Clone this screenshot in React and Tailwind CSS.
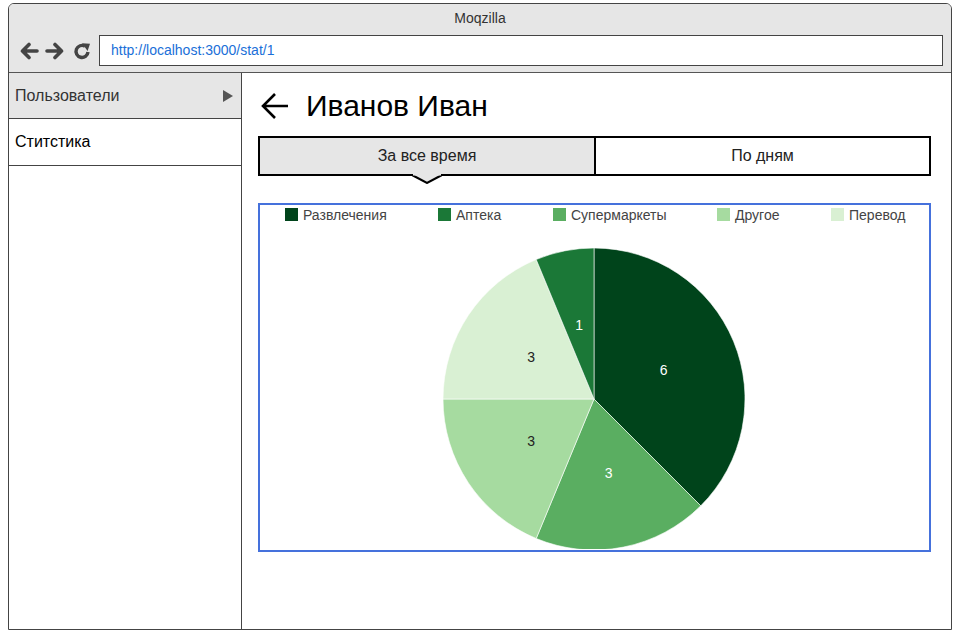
const slices = [
    { label: "Развлечения", value: 6, color: "#00441b", text: "#ffffff" },
    { label: "Супермаркеты", value: 3, color: "#5aae61", text: "#ffffff" },
    { label: "Другое", value: 3, color: "#a6dba0", text: "#222222" },
    { label: "Перевод", value: 3, color: "#d9f0d3", text: "#222222" },
    { label: "Аптека", value: 1, color: "#1b7837", text: "#ffffff" },
];

const legend = [
    { label: "Развлечения", color: "#00441b", x: 25 },
    { label: "Аптека", color: "#1b7837", x: 178 },
    { label: "Супермаркеты", color: "#5aae61", x: 293 },
    { label: "Другое", color: "#a6dba0", x: 457 },
    { label: "Перевод", color: "#d9f0d3", x: 571 },
];

const Pie = () => {
    const cx = 334;
    const cy = 194;
    const r = 151;
    const total = slices.reduce((s, d) => s + d.value, 0);
    let start = -Math.PI / 2;
    const parts = slices.map((d) => {
        const angle = (d.value / total) * Math.PI * 2;
        const end = start + angle;
        const x1 = cx + r * Math.cos(start);
        const y1 = cy + r * Math.sin(start);
        const x2 = cx + r * Math.cos(end);
        const y2 = cy + r * Math.sin(end);
        const large = angle > Math.PI ? 1 : 0;
        const mid = start + angle / 2;
        const lr = r * 0.5;
        const part = {
            ...d,
            path: `M${cx},${cy} L${x1},${y1} A${r},${r} 0 ${large} 1 ${x2},${y2} Z`,
            lx: cx + lr * Math.cos(mid),
            ly: cy + lr * Math.sin(mid),
        };
        start = end;
        return part;
    });

    return (
        <svg width="668" height="344" viewBox="0 0 668 344" className="block">
            {legend.map((l) => (
                <g key={l.label}>
                    <rect x={l.x} y={3} width="13" height="13" fill={l.color} />
                    <text
                        x={l.x + 18}
                        y={14.5}
                        fontSize="14"
                        fill="#444"
                        fontFamily="'Liberation Sans', Arial, sans-serif"
                    >
                        {l.label}
                    </text>
                </g>
            ))}
            {parts.map((p) => (
                <path key={p.label} d={p.path} fill={p.color} stroke="#ffffff" strokeWidth="0.6" />
            ))}
            {parts.map((p) => (
                <text
                    key={p.label + "-v"}
                    x={p.lx}
                    y={p.ly + 5}
                    textAnchor="middle"
                    fontSize="14"
                    fill={p.text}
                    fontFamily="'Liberation Sans', Arial, sans-serif"
                >
                    {p.value}
                </text>
            ))}
        </svg>
    );
};

export default function App() {
    return (
        <div className="w-[963px] h-[638px] bg-white pt-[3px] pl-[8px] font-['Liberation_Sans',Arial,sans-serif]">
            <div className="w-[944px] h-[627px] border border-[#444] rounded-t-[6px] flex flex-col overflow-hidden">
                <div className="h-[69px] bg-[#e6e6e6] border-b border-[#555] flex flex-col shrink-0">
                    <div className="h-[28px] flex items-center justify-center text-[14px] text-[#333]">
                        Moqzilla
                    </div>
                    <div className="flex items-center pl-[9px] pr-[8px] mt-[3px]">
                        <div className="flex items-center gap-[6px] w-[81px]">
                            <svg width="21" height="18" viewBox="0 0 21 18">
                                <path d="M19 9H5M11 2.5L4.5 9l6.5 6.5" stroke="#444" strokeWidth="3.6" fill="none" strokeLinejoin="round" strokeLinecap="round" />
                            </svg>
                            <svg width="21" height="18" viewBox="0 0 21 18">
                                <path d="M2 9h14M10 2.5l6.5 6.5-6.5 6.5" stroke="#444" strokeWidth="3.6" fill="none" strokeLinejoin="round" strokeLinecap="round" />
                            </svg>
                            <svg width="19" height="18" viewBox="0 0 19 18" className="ml-[1px]">
                                <path d="M15 10A6 6 0 1 1 12 4.2" stroke="#444" strokeWidth="3.4" fill="none" />
                                <path d="M9 1.2l8 0.5-2.4 7.2z" fill="#444" />
                            </svg>
                        </div>
                        <div className="flex-1 h-[31px] bg-white border border-[#444] flex items-center pl-[11px] text-[14px] text-[#1a6fd8]">
                            http://localhost:3000/stat/1
                        </div>
                    </div>
                </div>
                <div className="flex flex-1">
                    <div className="w-[233px] border-r border-[#444] shrink-0">
                        <div className="h-[46px] bg-[#e6e6e6] border-b border-[#444] flex items-center justify-between pl-[6px] pr-[8px] text-[16px] text-[#333]">
                            <span>Пользователи</span>
                            <svg width="10" height="12" viewBox="0 0 10 12">
                                <path d="M0 0L10 6L0 12z" fill="#555" />
                            </svg>
                        </div>
                        <div className="h-[47px] border-b border-[#444] flex items-center pl-[6px] text-[16px] text-black">
                            Ститстика
                        </div>
                    </div>
                    <div className="flex-1 pl-[16px] pt-[16px]">
                        <div className="flex items-center h-[34px]">
                            <svg width="30" height="30" viewBox="0 0 30 30" className="ml-[2px]">
                                <path d="M28 15H3M15 3L3 15l12 12" stroke="#000" strokeWidth="2.6" fill="none" />
                            </svg>
                            <span className="ml-[16px] text-[30px] text-black leading-none">Иванов Иван</span>
                        </div>
                        <div className="mt-[13px] w-[673px] h-[40px] flex border-2 border-black relative">
                            <div className="w-[336px] bg-[#e6e6e6] border-r-2 border-black flex items-center justify-center text-[16px] text-[#222]">
                                За все время
                            </div>
                            <div className="flex-1 flex items-center justify-center text-[16px] text-[#222]">
                                По дням
                            </div>
                            <svg width="30" height="10" viewBox="0 0 30 10" className="absolute left-[152px] top-[36px]">
                                <path d="M0 1L15 9L30 1" fill="#e6e6e6" stroke="#000" strokeWidth="2" />
                                <rect x="1" y="0" width="28" height="1.5" fill="#e6e6e6" />
                            </svg>
                        </div>
                        <div className="mt-[27px] w-[673px] h-[349px] border-2 border-[#4571dc]">
                            <Pie />
                        </div>
                    </div>
                </div>
            </div>
        </div>
    );
}
